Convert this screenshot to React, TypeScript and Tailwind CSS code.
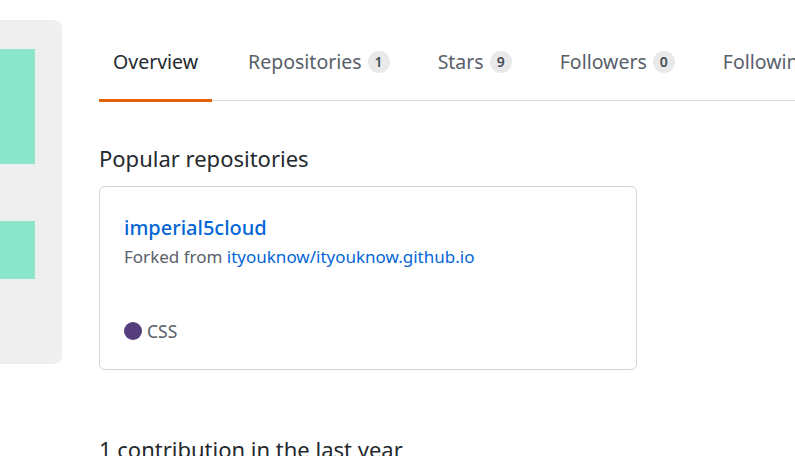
import React from "react";

const tabs = [
  { label: "Overview", count: null as string | null, active: true },
  { label: "Repositories", count: "1", active: false },
  { label: "Stars", count: "9", active: false },
  { label: "Followers", count: "0", active: false },
  { label: "Following", count: "0", active: false },
];

export default function App() {
  return (
    <div
      className="w-[795px] h-[456px] overflow-hidden bg-white flex"
      style={{ fontFamily: '"Noto Sans", "Open Sans", sans-serif' }}
    >
      {/* left side panel */}
      <div className="w-[62px] shrink-0 pt-[20px]">
        <div className="h-[344px] bg-[#efefef] rounded-r-[8px] pt-[29px] flex flex-col">
          <div className="w-[35px] h-[115px] bg-[#8ce6cc]" />
          <div className="w-[35px] h-[58px] bg-[#8ce6cc] mt-[57px]" />
        </div>
      </div>

      {/* main */}
      <div className="ml-[37px] flex-1 min-w-0">
        <nav className="h-[101px] border-b border-[#d8d8d8] flex whitespace-nowrap">
          {tabs.map((t) => (
            <div
              key={t.label}
              className="relative h-full px-[12px] mr-[24px] pt-[48px] flex items-start shrink-0"
            >
              <span
                className={
                  "text-[19.5px] leading-[28px] " +
                  (t.active ? "text-[#24292e] px-[2px]" : "text-[#586069]")
                }
              >
                {t.label}
              </span>
              {t.count !== null && (
                <span className="ml-[6px] mt-[3px] h-[22px] min-w-[22px] px-[6px] rounded-full bg-[#e9e9ea] text-[#444d56] text-[14px] leading-[22px] font-semibold text-center">
                  {t.count}
                </span>
              )}
              {t.active && (
                <div className="absolute left-0 right-0 bottom-[-2px] h-[3px] bg-[#e36209]" />
              )}
            </div>
          ))}
        </nav>

        <h2 className="mt-[43px] text-[22px] leading-[28px] text-[#24292e] font-normal">
          Popular repositories
        </h2>

        <div className="mt-[14px] w-[538px] h-[184px] border border-[#d1d5da] rounded-[6px] px-[24px] pt-[28px] flex flex-col">
          <a className="text-[20px] leading-[26px] text-[#0366d6] font-medium">
            imperial5cloud
          </a>
          <div className="mt-[5px] text-[17px] leading-[22px] text-[#586069]">
            Forked from <a className="text-[#0366d6]">ityouknow/ityouknow.github.io</a>
          </div>
          <div className="mt-[52px] flex items-center text-[17.5px] leading-[22px] text-[#586069]">
            <span className="w-[18px] h-[18px] rounded-full bg-[#563d7c] mr-[5px]" />
            <span>CSS</span>
          </div>
        </div>

        <h2 className="mt-[65px] text-[22px] leading-[28px] text-[#24292e] font-normal">
          1 contribution in the last year
        </h2>
      </div>
    </div>
  );
}
